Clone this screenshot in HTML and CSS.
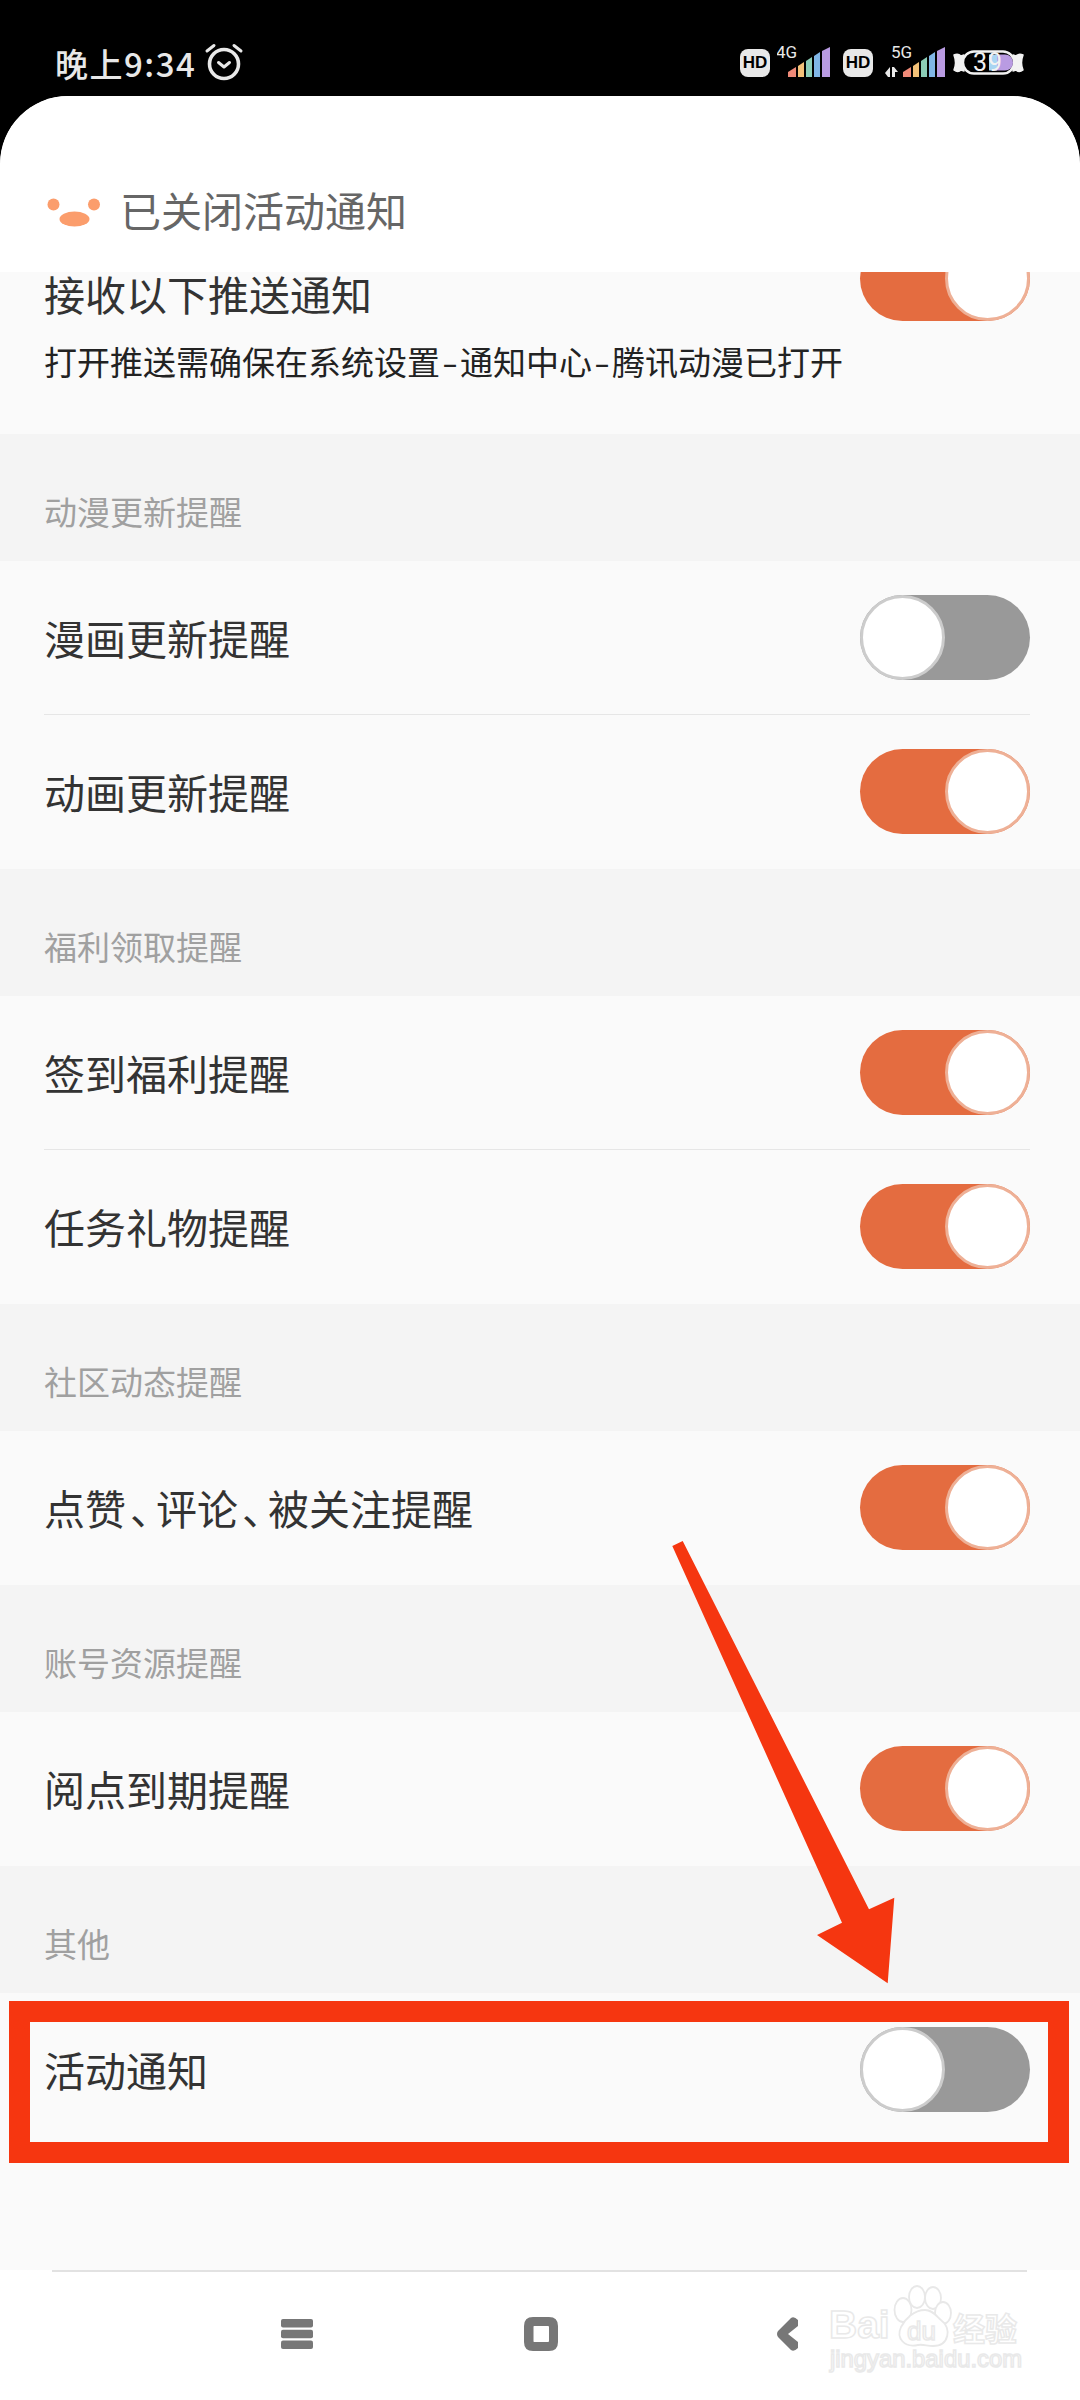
FILE: index.html
```html
<!DOCTYPE html>
<html lang="zh-CN">
<head>
<meta charset="utf-8">
<title>推送设置</title>
<link rel="stylesheet" href="styles.css">
</head>
<body>
<div class="page">
  <div class="status">
    <span class="time">晚上9:34</span>
    <svg class="alarm" width="40" height="38" viewBox="0 0 40 38" fill="none" stroke="#e8e8e8" stroke-linecap="round" stroke-linejoin="round">
      <circle cx="20" cy="21" r="14.500" stroke-width="3.600"/>
      <path d="M3 8 10 2.500M37 8 30 2.500" stroke-width="3"/>
      <path d="M14.500 19.500 20 24 25.500 19.500" stroke-width="3"/>
    </svg>
    <div class="status-right">
      <span class="hd">HD</span>
      <svg class="sig1" width="53" height="34" viewBox="0 -4 53 34">
        <text class="net" x="-1" y="11">4G</text>
        <path d="M11 30V25L19 20V30Z" fill="#ef8a78"/>
        <path d="M21 30V19L27 15V30Z" fill="#f3c178"/>
        <path d="M29 30V14L35 10V30Z" fill="#8ccdb7"/>
        <path d="M37 30V9L43 5V30Z" fill="#80b6e6"/>
        <path d="M45 30V4L53 0V30Z" fill="#b99be2"/>
      </svg>
      <span class="hd hd2">HD</span>
      <svg class="sig2" width="60" height="34" viewBox="0 -4 60 34">
        <text class="net" x="6" y="11">5G</text>
        <path d="M0 26 5 20V30H3ZM7 20H9L13 25H10V30H7Z" fill="#e8e8e8"/>
        <path d="M18 30V25L26 20V30Z" fill="#ef8a78"/>
        <path d="M28 30V19L34 15V30Z" fill="#f3c178"/>
        <path d="M36 30V14L42 10V30Z" fill="#8ccdb7"/>
        <path d="M44 30V9L50 5V30Z" fill="#80b6e6"/>
        <path d="M52 30V4L60 0V30Z" fill="#b99be2"/>
      </svg>
      <svg class="batt" width="71" height="34" viewBox="0 -2 71 34">
        <path class="wing" d="M1 10Q5 8 8 11L11 10V26L8 25Q5 28 1 25Q4 18 1 10Z"/>
        <path class="wing" d="M70 10Q66 8 63 11L60 10V26L63 25Q66 28 70 25Q67 18 70 10Z"/>
        <rect x="10" y="6.500" width="51" height="22" rx="11" fill="#000" stroke="#f2f2f2" stroke-width="2.400"/>
        <path d="M42 9.500H52A8 8 0 0 1 52 25.500H42Z" fill="#b99be2"/>
        <path d="M36 9.500H44V25.500H36Z" fill="#a9d5f2"/>
        <text class="batt-num" x="20" y="26">39</text>
      </svg>
    </div>
  </div>

  <div class="app">
    <header class="header">
      <svg class="logo" width="54" height="36" viewBox="0 0 54 36" fill="#fb9d6c">
        <circle cx="6.500" cy="6.500" r="6"/>
        <circle cx="47" cy="6.500" r="6"/>
        <ellipse cx="27.500" cy="21" rx="15" ry="7.500"/>
      </svg>
      <h1 class="title">已关闭活动通知</h1>
    </header>

    <section class="master">
      <div class="master-text">
        <div class="label">接收以下推送通知</div>
        <div class="hint">打开推送需确保在系统设置<span class="dash">-</span>通知中心<span class="dash">-</span>腾讯动漫已打开</div>
      </div>
      <div class="toggle on master-toggle"><span class="knob"></span></div>
    </section>

    <div class="group-title">动漫更新提醒</div>
    <div class="row with-rule"><span class="label">漫画更新提醒</span><div class="toggle"><span class="knob"></span></div></div>
    <div class="row"><span class="label">动画更新提醒</span><div class="toggle on"><span class="knob"></span></div></div>

    <div class="group-title">福利领取提醒</div>
    <div class="row with-rule"><span class="label">签到福利提醒</span><div class="toggle on"><span class="knob"></span></div></div>
    <div class="row"><span class="label">任务礼物提醒</span><div class="toggle on"><span class="knob"></span></div></div>

    <div class="group-title">社区动态提醒</div>
    <div class="row"><span class="label">点赞<span class="pun">、</span>评论<span class="pun">、</span>被关注提醒</span><div class="toggle on"><span class="knob"></span></div></div>

    <div class="group-title">账号资源提醒</div>
    <div class="row"><span class="label">阅点到期提醒</span><div class="toggle on"><span class="knob"></span></div></div>

    <div class="group-title">其他</div>
    <div class="row"><span class="label">活动通知</span><div class="toggle"><span class="knob"></span></div></div>
    <div class="filler"></div>

    <nav class="nav">
      <div class="nav-rule"></div>
      <div class="nav-icons">
        <svg class="nav-menu" width="32" height="30" viewBox="0 0 32 30" fill="#777">
          <rect x="0" y="0" width="32" height="8.500" rx="2"/>
          <rect x="0" y="10.700" width="32" height="8.500" rx="2"/>
          <rect x="0" y="21.500" width="32" height="8.500" rx="2"/>
        </svg>
        <svg class="nav-home" width="34" height="34" viewBox="0 0 34 34">
          <path fill="#777" fill-rule="evenodd" d="M9 0H25Q34 0 34 9V25Q34 34 25 34H9Q0 34 0 25V9Q0 0 9 0ZM10 9Q9.500 9 9.500 10V24Q9.500 25 10 25H24Q25 25 25 24V10Q25 9 24 9Z"/>
        </svg>
        <svg class="nav-back" width="21" height="34" viewBox="0 0 21 34">
          <path fill="#777" d="M14 1Q17 -1 21 3V9L11 17 21 25V31Q17 35 14 33L1 20Q-1 17 1 14Z"/>
        </svg>
      </div>
    </nav>
  </div>

  <div class="highlight"></div>

  <svg class="arrow" width="1080" height="2400" viewBox="0 0 1080 2400">
    <path fill="#f53610" d="M672.300 1546 682.700 1541 869 1909.300 894.300 1897.700 887.700 1983.300 817 1935 842 1922.700Z"/>
  </svg>

  <svg class="watermark" width="210" height="100" viewBox="0 0 210 100">
    <g class="wm-paw">
      <ellipse cx="97" cy="17" rx="8" ry="11"/>
      <ellipse cx="113" cy="18" rx="8" ry="11"/>
      <ellipse cx="83" cy="30" rx="8.500" ry="12"/>
      <ellipse cx="123" cy="33" rx="8" ry="11"/>
      <path d="M105 30C113 30 117 37 122 41 131 47 130 66 113 66 107 66 103 64 98 65 84 68 76 58 81 47 85 39 94 30 105 30Z"/>
    </g>
    <text class="wm-big" x="9" y="58">Bai</text>
    <text class="wm-du" x="87" y="60">du</text>
    <text class="wm-cn" x="133" y="61">经验</text>
    <text class="wm-url" x="10" y="87" textLength="192" lengthAdjust="spacingAndGlyphs">jingyan.baidu.com</text>
  </svg>
</div>
</body>
</html>
```

FILE: styles.css
```css
* { box-sizing: border-box; }

html, body {
  margin: 0;
  padding: 0;
  background: #000;
}

body {
  font-family: "Noto Sans CJK SC", "Noto Sans", sans-serif;
}

.page {
  position: relative;
  width: 1080px;
  height: 2400px;
  overflow: hidden;
  background: #000;
}

/* status bar */
.status {
  display: flex;
  align-items: flex-start;
  height: 96px;
  padding: 43px 56px 0 55px;
}

.time {
  font-size: 33px;
  line-height: 40px;
  font-weight: 500;
  color: #e8e8e8;
  letter-spacing: 1.500px;
}

.alarm {
  margin-left: 8px;
}

.status-right {
  display: flex;
  align-items: flex-end;
  margin-left: auto;
  height: 34px;
}

.hd {
  width: 30px;
  height: 28px;
  border-radius: 8px;
  background: #e8e8e8;
  color: #000;
  font-family: "Liberation Sans", sans-serif;
  font-weight: 700;
  font-size: 17px;
  line-height: 28px;
  text-align: center;
}

.hd2 { margin-left: 13px; }
.sig1 { margin-left: 7px; }
.sig2 { margin-left: 12px; }
.batt { margin-left: 8px; }

.net {
  font-family: "Roboto", sans-serif;
  font-size: 17px;
  fill: #e8e8e8;
}

.wing {
  fill: #f2f2f2;
  stroke: #f2f2f2;
  stroke-width: 1.500;
  stroke-linejoin: round;
}

.batt-num {
  font-family: "Roboto", sans-serif;
  font-size: 25px;
  letter-spacing: 1px;
  fill: #f2f2f2;
}

/* app sheet */
.app {
  display: flex;
  flex-direction: column;
  height: 2304px;
  border-radius: 68px 68px 0 0;
  background: #fafafa;
  overflow: hidden;
}

.header {
  position: relative;
  z-index: 1;
  display: flex;
  align-items: center;
  height: 176px;
  padding: 64px 0 0 47px;
  background: #fff;
  border-radius: 68px 68px 0 0;
}

.logo {
  flex: none;
}

.title {
  margin: -15px 0 0 19px;
  font-size: 41px;
  line-height: 48px;
  font-weight: 400;
  color: #666;
}

.master {
  display: flex;
  justify-content: space-between;
  height: 162px;
  padding: 0 50px 0 44px;
  flex: none;
}

.master-text {
  display: flex;
  flex-direction: column;
  gap: 22px;
  margin-top: -3px;
}

.master-toggle {
  margin-top: -36px;
}

.label {
  font-size: 41px;
  line-height: 48px;
  color: #333;
}

.row > .label {
  padding-bottom: 2px;
}

.hint {
  font-size: 33px;
  line-height: 44px;
  color: #222;
  white-space: nowrap;
}

.dash {
  display: inline-block;
  width: 20px;
  text-align: center;
  transform: scaleX(1.400);
}

.pun {
  margin-left: 4px;
  letter-spacing: -15px;
}

.group-title {
  flex: none;
  display: flex;
  align-items: flex-end;
  height: 127px;
  padding: 0 0 30px 44px;
  background: #f4f4f4;
  font-size: 33px;
  line-height: 40px;
  color: #a0a0a0;
}

.row {
  flex: none;
  display: flex;
  align-items: center;
  justify-content: space-between;
  height: 154px;
  margin: 0 50px 0 44px;
  padding-bottom: 1px;
}

.with-rule {
  padding-bottom: 0;
  border-bottom: 1px solid #e6e6e6;
}

.toggle {
  flex: none;
  display: flex;
  width: 170px;
  height: 85px;
  border-radius: 43px;
  background: #999;
}

.toggle.on {
  justify-content: flex-end;
  background: #e46c40;
}

.knob {
  width: 85px;
  height: 85px;
  border-radius: 50%;
  background: #fff;
  border: 3px solid #ccc;
}

.on .knob {
  border-color: #eeb096;
}

.filler {
  flex: 1;
}

.nav {
  flex: none;
  height: 130px;
  background: #fff;
}

.nav-rule {
  height: 2px;
  margin: 0 53px 0 52px;
  background: #e2e2e2;
}

.nav-icons {
  display: flex;
  align-items: center;
  height: 128px;
  padding: 0 0 0 281px;
  margin-top: -2px;
}

.nav-home { margin-left: 211px; }
.nav-back { margin-left: 219px; }

/* annotations drawn over the screenshot */
.highlight {
  position: absolute;
  left: 9px;
  top: 2001px;
  width: 1060px;
  height: 162px;
  border: 21px solid #f63610;
}

.arrow {
  position: absolute;
  left: 0;
  top: 0;
}

.watermark {
  position: absolute;
  left: 820px;
  top: 2280px;
}

.wm-paw ellipse,
.wm-paw path {
  fill: #fff;
  stroke: #e8e8e8;
  stroke-width: 1.800;
}

.wm-big, .wm-du, .wm-cn, .wm-url {
  fill: #fff;
  stroke: #e9e9e9;
  stroke-width: 1.500;
}

.wm-big {
  font-family: "Liberation Sans", sans-serif;
  font-weight: 700;
  font-size: 39px;
}

.wm-du {
  font-family: "Liberation Sans", sans-serif;
  font-size: 26px;
}

.wm-cn {
  font-size: 32px;
  font-weight: 700;
}

.wm-url {
  font-family: "Liberation Sans", sans-serif;
  font-size: 24px;
}
```
